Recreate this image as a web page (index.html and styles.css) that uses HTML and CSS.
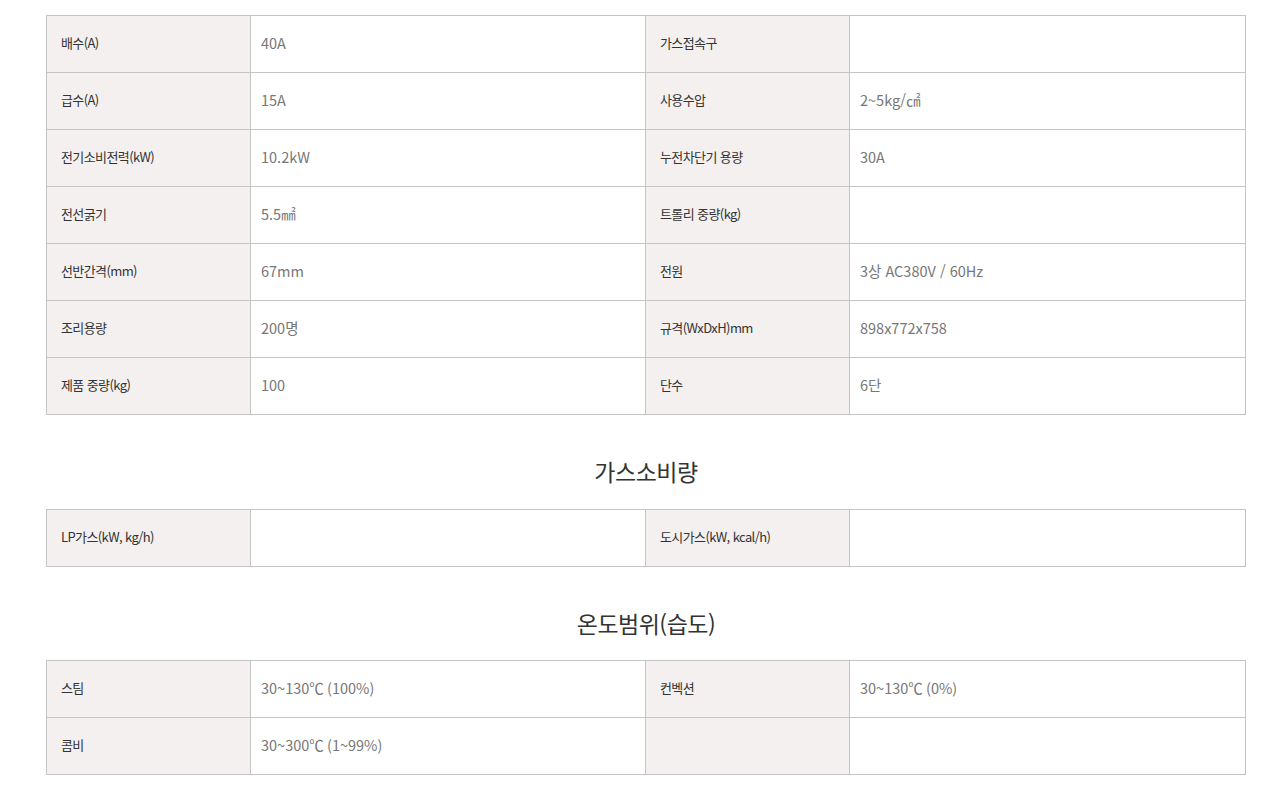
FILE: index.html
```html
<!DOCTYPE html>
<html lang="ko">
<head>
<meta charset="utf-8">
<title>제품 사양</title>
<link rel="stylesheet" href="styles.css">
</head>
<body>
<div class="wrap">
  <table class="spec">
    <colgroup><col class="c-label"><col class="c-val"><col class="c-label"><col class="c-val2"></colgroup>
    <tr><th>배수(A)</th><td>40A</td><th>가스접속구</th><td></td></tr>
    <tr><th>급수(A)</th><td>15A</td><th>사용수압</th><td>2~5kg/㎠</td></tr>
    <tr><th>전기소비전력(kW)</th><td>10.2kW</td><th>누전차단기 용량</th><td>30A</td></tr>
    <tr><th>전선굵기</th><td>5.5㎟</td><th>트롤리 중량(kg)</th><td></td></tr>
    <tr><th>선반간격(mm)</th><td>67mm</td><th>전원</th><td>3상 AC380V / 60Hz</td></tr>
    <tr><th>조리용량</th><td>200명</td><th>규격(WxDxH)mm</th><td>898x772x758</td></tr>
    <tr><th>제품 중량(kg)</th><td>100</td><th>단수</th><td>6단</td></tr>
  </table>

  <h3 class="sec-title">가스소비량</h3>
  <table class="spec">
    <colgroup><col class="c-label"><col class="c-val"><col class="c-label"><col class="c-val2"></colgroup>
    <tr><th>LP가스(kW, kg/h)</th><td></td><th>도시가스(kW, kcal/h)</th><td></td></tr>
  </table>

  <h3 class="sec-title sec-title--last">온도범위(습도)</h3>
  <table class="spec">
    <colgroup><col class="c-label"><col class="c-val"><col class="c-label"><col class="c-val2"></colgroup>
    <tr><th>스팀</th><td>30~130℃ (100%)</td><th>컨벡션</th><td>30~130℃ (0%)</td></tr>
    <tr><th>콤비</th><td>30~300℃ (1~99%)</td><th></th><td></td></tr>
  </table>
</div>
</body>
</html>
```

FILE: styles.css
```css
html, body {
  margin: 0;
  padding: 0;
  background: #ffffff;
}
body {
  font-family: "Noto Sans CJK KR", "Noto Sans", sans-serif;
  color: #333;
}
.wrap {
  width: 1200px;
  margin-left: 46px;
  padding-top: 15px;
}
.spec {
  width: 1199px;
  border-collapse: collapse;
  table-layout: fixed;
  border: 1px solid #c4c4c4;
}
.c-label { width: 204px; }
.c-val { width: 395px; }
.c-val2 { width: 396px; }
.spec th,
.spec td {
  padding: 0 0 4px 14px;
  border: 1px solid #c4c4c4;
  text-align: left;
  vertical-align: middle;
  box-sizing: border-box;
  height: 57px;
}
.spec th {
  background: #f4f0ef;
  font-weight: 400;
  font-size: 13px;
  letter-spacing: -0.6px;
  color: #333;
}
.spec td {
  background: #fff;
  font-size: 14.5px;
  letter-spacing: 0;
  color: #777;
  padding-left: 10px;
}
.sec-title {
  margin: 41px 0 23px;
  height: 30px;
  line-height: 30px;
  text-align: center;
  font-size: 23px;
  font-weight: 400;
  color: #333;
  letter-spacing: -0.5px;
}
.sec-title--last {
  margin-bottom: 22px;
}
```
